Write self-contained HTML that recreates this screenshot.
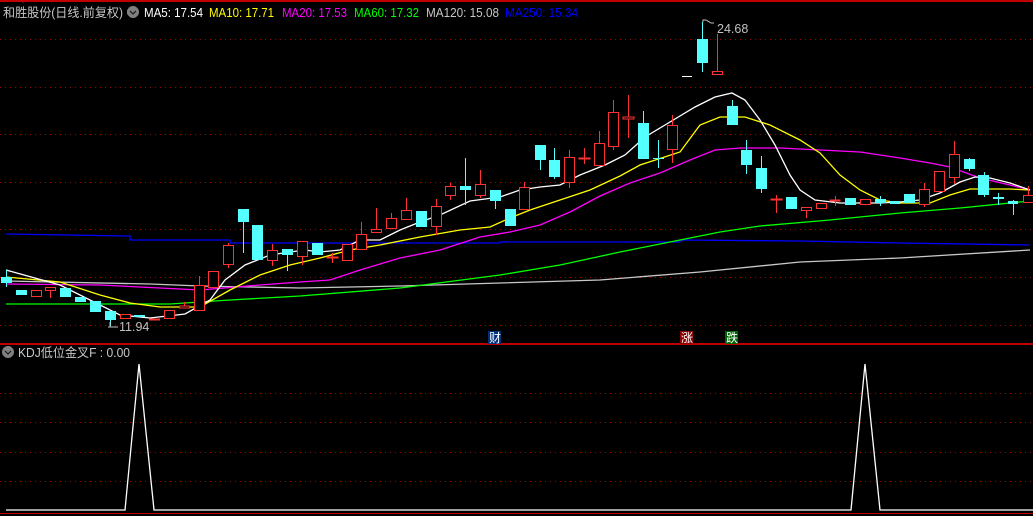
<!DOCTYPE html>
<html><head><meta charset="utf-8"><style>
html,body{margin:0;padding:0;background:#000;width:1033px;height:516px;overflow:hidden}
svg{display:block}
text{font-family:"Liberation Sans","Noto Sans CJK SC",sans-serif;font-size:12px}
</style></head><body>
<svg width="1033" height="516" xmlns="http://www.w3.org/2000/svg" shape-rendering="crispEdges">
<rect width="1033" height="516" fill="#000"/>
<line x1="0" y1="1" x2="1033" y2="1" stroke="#c00000" stroke-width="2"/>
<line x1="23" y1="0" x2="23" y2="3" stroke="#c00000"/>
<g stroke="#a00000" stroke-dasharray="1,4" stroke-width="1">
<line x1="0" y1="39.5" x2="1033" y2="39.5"/><line x1="0" y1="87.5" x2="1033" y2="87.5"/>
<line x1="0" y1="134.5" x2="1033" y2="134.5"/><line x1="0" y1="182.5" x2="1033" y2="182.5"/>
<line x1="0" y1="229.5" x2="1033" y2="229.5"/><line x1="0" y1="277.5" x2="1033" y2="277.5"/>
<line x1="0" y1="325.5" x2="1033" y2="325.5"/>
<line x1="0" y1="393.5" x2="1033" y2="393.5"/><line x1="0" y1="422.5" x2="1033" y2="422.5"/>
<line x1="0" y1="452.5" x2="1033" y2="452.5"/><line x1="0" y1="481.5" x2="1033" y2="481.5"/>
</g>
<line x1="0" y1="344" x2="1033" y2="344" stroke="#c00000" stroke-width="2"/>
<line x1="0" y1="513.5" x2="1033" y2="513.5" stroke="#c00000" stroke-width="1"/>

<g fill="none" stroke-width="1.3" shape-rendering="auto">
<polyline stroke="#0000ff" points="6,234 130,236 130,240 230,240 230,243 400,243 500,243 500,242 680,242 680,240 800,241 900,243 1030,245"/>
<polyline stroke="#c8c8c8" points="6,281 150,284 200,286 300,288 400,286 500,283 600,280 700,272 800,262 900,258 1030,250"/>
<polyline stroke="#00ff00" points="6,304 170,304 230,300 300,296 400,288 500,275 560,265 620,252 680,240 720,232 760,226 830,220 900,213 960,208 1030,201"/>
<polyline stroke="#ff00ff" points="6,284 100,285 200,290 260,285 300,282 330,280 360,270 400,258 440,250 480,237 510,232 540,225 570,212 600,196 630,183 660,173 690,160 715,150 740,148 780,148 820,150 860,152 900,158 930,163 950,167 980,178 1010,185 1030,190"/>
<polyline stroke="#ffff00" points="6,277 60,282 100,295 130,303 160,307 200,307 230,290 260,275 290,265 320,258 350,250 380,245 420,237 460,230 490,227 510,218 530,210 560,200 590,190 620,176 640,165 680,152 700,125 720,117 745,117 770,125 800,140 820,153 840,175 860,190 880,200 900,203 930,203 950,195 970,189 1010,189 1030,190"/>
<polyline stroke="#ffffff" points="6,270 60,285 120,315 150,318 185,314 210,300 225,280 245,265 270,255 290,252 305,250 320,252 340,250 360,240 380,240 400,230 420,222 440,215 470,201 500,197 520,190 540,187 560,185 580,175 605,165 625,155 645,137 665,125 695,107 715,97 732,93 745,100 760,120 775,145 790,175 800,190 815,200 840,203 880,203 900,202 920,200 940,193 960,182 975,177 990,178 1010,183 1030,190"/>
</g>

<g stroke-width="1">
<g stroke="#54ffff">
<line x1="6.5" y1="270" x2="6.5" y2="287"/><line x1="110.5" y1="320" x2="110.5" y2="326"/>
<line x1="243.5" y1="222" x2="243.5" y2="253"/><line x1="287.5" y1="255" x2="287.5" y2="271"/>
<line x1="465.5" y1="158" x2="465.5" y2="205"/><line x1="495.5" y1="201" x2="495.5" y2="209"/>
<line x1="540.5" y1="160" x2="540.5" y2="170"/><line x1="554.5" y1="148" x2="554.5" y2="179"/>
<line x1="643.5" y1="111" x2="643.5" y2="159"/><line x1="658.5" y1="140" x2="658.5" y2="168"/>
<line x1="702.5" y1="22" x2="702.5" y2="72"/><line x1="732.5" y1="100" x2="732.5" y2="106"/>
<line x1="746.5" y1="140" x2="746.5" y2="174"/><line x1="761.5" y1="156" x2="761.5" y2="193"/>
<line x1="880.5" y1="196" x2="880.5" y2="206"/><line x1="969.5" y1="158" x2="969.5" y2="171"/>
<line x1="984.5" y1="172" x2="984.5" y2="197"/><line x1="998.5" y1="193" x2="998.5" y2="205"/>
<line x1="1013.5" y1="200" x2="1013.5" y2="215"/><line x1="653" y1="158.5" x2="664" y2="158.5"/>
</g>
<g fill="#54ffff">
<rect x="1" y="277" width="11" height="6"/><rect x="16" y="290" width="11" height="5"/>
<rect x="60" y="288" width="11" height="9"/><rect x="75" y="297" width="11" height="5"/>
<rect x="90" y="301" width="11" height="11"/><rect x="105" y="311" width="11" height="9"/>
<rect x="134" y="315" width="11" height="2"/><rect x="238" y="209" width="11" height="13"/>
<rect x="252" y="225" width="11" height="35"/><rect x="282" y="249" width="11" height="6"/>
<rect x="312" y="243" width="11" height="12"/><rect x="416" y="211" width="11" height="16"/>
<rect x="460" y="186" width="11" height="4"/><rect x="490" y="190" width="11" height="11"/>
<rect x="505" y="209" width="11" height="17"/><rect x="535" y="145" width="11" height="15"/>
<rect x="549" y="160" width="11" height="17"/><rect x="638" y="123" width="11" height="36"/>
<rect x="697" y="39" width="11" height="24"/><rect x="727" y="106" width="11" height="19"/>
<rect x="741" y="150" width="11" height="15"/><rect x="756" y="168" width="11" height="21"/>
<rect x="786" y="197" width="11" height="12"/><rect x="845" y="198" width="11" height="7"/>
<rect x="875" y="199" width="11" height="4"/><rect x="890" y="201" width="10" height="3"/>
<rect x="904" y="194" width="11" height="9"/><rect x="964" y="159" width="11" height="10"/>
<rect x="978" y="175" width="11" height="20"/><rect x="993" y="197" width="11" height="2"/>
<rect x="1008" y="201" width="10" height="3"/>
</g>
<line x1="682" y1="76.5" x2="692" y2="76.5" stroke="#fff"/>
<g stroke="#ff3232">
<line x1="50.5" y1="287" x2="50.5" y2="298"/><line x1="184.5" y1="302" x2="184.5" y2="308"/>
<line x1="199.5" y1="276" x2="199.5" y2="310"/><line x1="228.5" y1="243" x2="228.5" y2="268"/>
<line x1="272.5" y1="244" x2="272.5" y2="266"/><line x1="302.5" y1="241" x2="302.5" y2="265"/>
<line x1="332.5" y1="253" x2="332.5" y2="263"/><line x1="361.5" y1="222" x2="361.5" y2="249"/>
<line x1="376.5" y1="208" x2="376.5" y2="232"/><line x1="391.5" y1="213" x2="391.5" y2="228"/>
<line x1="406.5" y1="198" x2="406.5" y2="219"/><line x1="436.5" y1="199" x2="436.5" y2="235"/>
<line x1="450.5" y1="183" x2="450.5" y2="200"/><line x1="480.5" y1="170" x2="480.5" y2="198"/>
<line x1="524.5" y1="182" x2="524.5" y2="209"/><line x1="569.5" y1="150" x2="569.5" y2="188"/>
<line x1="584.5" y1="148" x2="584.5" y2="164"/><line x1="599.5" y1="131" x2="599.5" y2="165"/>
<line x1="613.5" y1="100" x2="613.5" y2="150"/><line x1="628.5" y1="95" x2="628.5" y2="138"/>
<line x1="672.5" y1="115" x2="672.5" y2="163"/><line x1="717.5" y1="34" x2="717.5" y2="71"/>
<line x1="776.5" y1="195" x2="776.5" y2="213"/><line x1="806.5" y1="207" x2="806.5" y2="218"/>
<line x1="835.5" y1="196" x2="835.5" y2="206"/><line x1="924.5" y1="183" x2="924.5" y2="207"/>
<line x1="954.5" y1="141" x2="954.5" y2="184"/><line x1="1028.5" y1="186" x2="1028.5" y2="202"/>
</g>
<g stroke="#ff3232" fill="#000">
<rect x="31.5" y="290.5" width="10" height="6"/><rect x="45.5" y="287.5" width="10" height="3"/>
<rect x="120.5" y="314.5" width="10" height="4"/><rect x="149.5" y="319" width="10" height="1"/>
<rect x="164.5" y="310.5" width="10" height="8"/><rect x="179.5" y="306" width="10" height="2"/>
<rect x="194.5" y="285.5" width="10" height="25"/><rect x="208.5" y="271.5" width="10" height="16"/>
<rect x="223.5" y="245.5" width="10" height="19"/><rect x="267.5" y="250.5" width="10" height="10"/>
<rect x="297.5" y="241.5" width="10" height="15"/><rect x="327" y="257" width="11" height="1"/>
<rect x="342.5" y="244.5" width="10" height="16"/><rect x="356.5" y="234.5" width="10" height="15"/>
<rect x="371.5" y="229.5" width="10" height="3"/><rect x="386.5" y="218.5" width="10" height="10"/>
<rect x="401.5" y="210.5" width="10" height="9"/><rect x="431.5" y="206.5" width="10" height="20"/>
<rect x="445.5" y="186.5" width="10" height="9"/><rect x="475.5" y="184.5" width="10" height="11"/>
<rect x="519.5" y="187.5" width="10" height="22"/><rect x="564.5" y="157.5" width="10" height="25"/>
<rect x="579" y="158" width="11" height="1"/><rect x="594.5" y="143.5" width="10" height="22"/>
<rect x="608.5" y="112.5" width="10" height="34"/><rect x="623" y="117" width="11" height="2"/>
<rect x="667.5" y="125.5" width="10" height="24"/><rect x="712.5" y="71.5" width="10" height="3"/>
<rect x="771" y="199" width="11" height="1"/><rect x="801.5" y="207.5" width="10" height="3"/>
<rect x="816.5" y="203.5" width="10" height="5"/><rect x="830" y="200" width="10" height="1"/>
<rect x="860.5" y="199.5" width="10" height="5"/><rect x="919.5" y="189.5" width="10" height="15"/>
<rect x="934.5" y="171.5" width="10" height="20"/><rect x="949.5" y="154.5" width="10" height="23"/>
<rect x="1023.5" y="195.5" width="10" height="7"/>
</g>
</g>

<g fill="#c0c0c0" stroke="#c0c0c0">
<path d="M110 322 v5 M108 327 h10" fill="none"/>
<path d="M703 22 v-2 h3 l5 3 h3" fill="none"/>
</g>
<text x="119" y="331" fill="#c0c0c0" style="font-size:12.5px">11.94</text>
<text x="717" y="33" fill="#c0c0c0" style="font-size:12.5px">24.68</text>
<rect x="488" y="331" width="13" height="13" fill="#00307a"/><text x="489" y="342" fill="#fff">财</text>
<rect x="680" y="331" width="13" height="13" fill="#8b0000"/><text x="681" y="342" fill="#fff">涨</text>
<rect x="725" y="331" width="13" height="13" fill="#006400"/><text x="726" y="342" fill="#fff">跌</text>

<text x="3" y="17" fill="#c8c8c8" style="font-size:12.5px" textLength="120" lengthAdjust="spacingAndGlyphs">和胜股份(日线.前复权)</text>
<circle cx="133" cy="12" r="6" fill="#808080"/><path d="M130 11 l3 3 l3 -3" stroke="#222" fill="none" stroke-width="1.3" shape-rendering="auto"/>
<text x="144" y="17" fill="#ffffff" style="font-size:13px" textLength="59" lengthAdjust="spacingAndGlyphs">MA5: 17.54</text>
<text x="209" y="17" fill="#ffff00" style="font-size:13px" textLength="65" lengthAdjust="spacingAndGlyphs">MA10: 17.71</text>
<text x="282" y="17" fill="#ff00ff" style="font-size:13px" textLength="65" lengthAdjust="spacingAndGlyphs">MA20: 17.53</text>
<text x="354" y="17" fill="#00ff00" style="font-size:13px" textLength="65" lengthAdjust="spacingAndGlyphs">MA60: 17.32</text>
<text x="426" y="17" fill="#c8c8c8" style="font-size:13px" textLength="73" lengthAdjust="spacingAndGlyphs">MA120: 15.08</text>
<text x="505" y="17" fill="#0000ff" style="font-size:13px" textLength="73" lengthAdjust="spacingAndGlyphs">MA250: 15.34</text>

<circle cx="8" cy="352" r="6" fill="#808080"/><path d="M5 351 l3 3 l3 -3" stroke="#222" fill="none" stroke-width="1.3" shape-rendering="auto"/>
<text x="18" y="357" fill="#c8c8c8" style="font-size:12.5px" textLength="112" lengthAdjust="spacingAndGlyphs">KDJ低位金叉F : 0.00</text>

<polyline fill="none" stroke="#fff" stroke-width="1.3" shape-rendering="auto" points="6,510 125,510 139,364 154,510 851,510 865,364 880,510 1033,510"/>
</svg>
</body></html>
